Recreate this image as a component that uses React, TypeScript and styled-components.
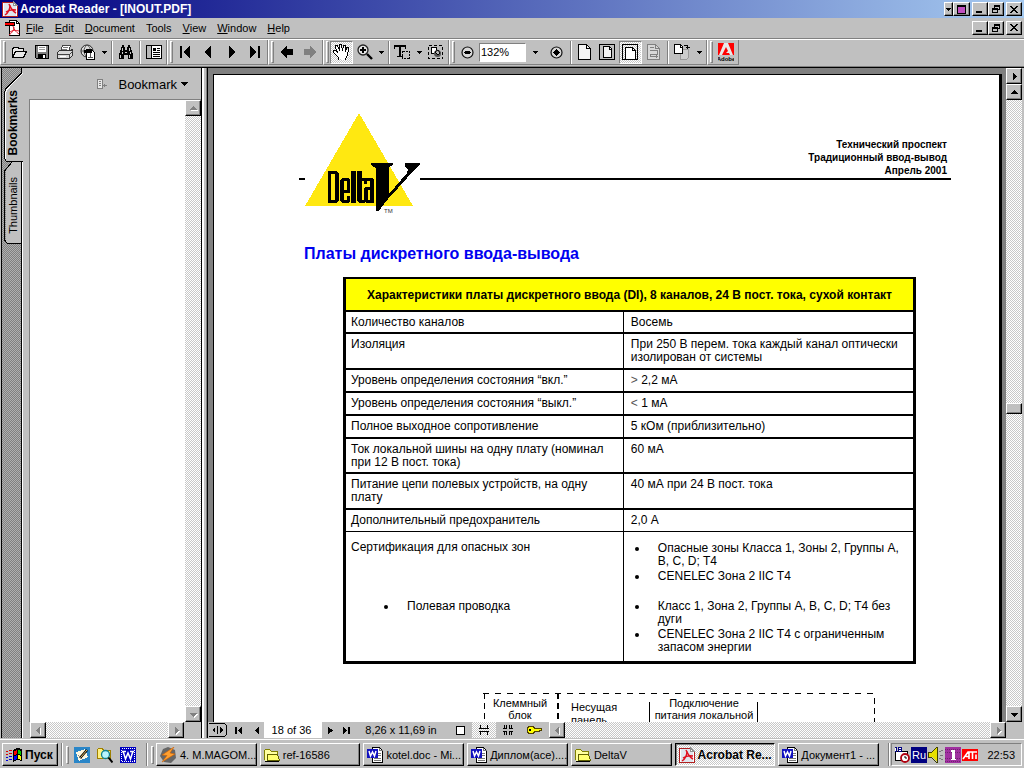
import React from 'react';
import styled, { createGlobalStyle, css } from 'styled-components';

const FACE = '#c0c0c0';
const SHADE = '#808080';
const HATCH = 'repeating-conic-gradient(#ffffff 0 25%, #c8c8c8 0 50%) 0 0 / 2px 2px';
const DARK_HATCH = 'repeating-conic-gradient(#808080 0 25%, #b0b0b0 0 50%) 0 0 / 2px 2px';

const Global = createGlobalStyle`
  * { box-sizing: border-box; }
  body { margin: 0; background: ${FACE}; overflow: hidden; }
  body, button, input { font-family: "Liberation Sans", Arial, sans-serif; font-size: 11px; color: #000; }
  button { margin: 0; padding: 0; border: 0; background: none; cursor: default; }
  svg { display: block; flex: none; }
`;

const raised = css`
  background: ${FACE};
  border: 1px solid;
  border-color: #fff #000 #000 #fff;
  box-shadow: inset -1px -1px 0 ${SHADE};
`;

const sunken = css`
  border: 1px solid;
  border-color: ${SHADE} #fff #fff ${SHADE};
`;

const Window = styled.div`
  height: 100vh;
  display: flex;
  flex-direction: column;
  background: ${FACE};
`;

/* ---------- title and menu ---------- */

const TitleBar = styled.header`
  flex: none;
  height: 18px;
  display: flex;
  align-items: center;
  gap: 2px;
  padding: 0 2px;
  background: linear-gradient(90deg, #000080, #a6caf0);
`;

const Title = styled.h1`
  flex: 1;
  margin: 0;
  font-size: 12px;
  line-height: 18px;
  font-weight: bold;
  color: #fff;
  white-space: nowrap;
`;

const MenuBar = styled.nav`
  flex: none;
  height: 22px;
  display: flex;
  align-items: center;
  padding: 0 2px 2px 5px;
  border-bottom: 1px solid #fff;
  box-shadow: inset 0 -1px 0 ${SHADE};
`;

const MenuItem = styled.button`
  padding: 0 6px 0 5px;
  line-height: 18px;
`;

const Spacer = styled.div`
  flex: 1;
`;

const WindowButtons = styled.div`
  display: flex;
  gap: 2px;
`;

const Joined = styled.div`
  display: flex;
`;

const CaptionButton = styled.button<{ $w?: number }>`
  ${raised}
  width: ${p => p.$w ?? 16}px;
  height: 14px;
  display: flex;
  align-items: center;
  justify-content: center;
`;

/* ---------- toolbar ---------- */

const Toolbar = styled.div`
  flex: none;
  height: 28px;
  display: flex;
  align-items: flex-start;
  border-bottom: 1px solid #000;
  box-shadow: inset 0 -1px 0 ${SHADE};
`;

const ToolGroup = styled.div`
  flex: none;
  height: 25px;
  display: flex;
  align-items: center;
  padding-right: 1px;
  border-left: 1px solid #fff;
  border-right: 1px solid ${SHADE};
  border-bottom: 1px solid ${SHADE};
`;

const Grip = styled.div<{ $tall?: boolean }>`
  flex: none;
  width: 3px;
  height: ${p => (p.$tall ? 18 : 22)}px;
  margin: 0 1px 0 2px;
  border: 1px solid;
  border-color: #fff ${SHADE} ${SHADE} #fff;
`;

const Tool = styled.button<{ $w?: number; $pressed?: boolean }>`
  flex: none;
  width: ${p => p.$w ?? 23}px;
  height: 23px;
  display: flex;
  align-items: center;
  justify-content: center;
  ${p => p.$pressed && css`background: ${HATCH}; ${sunken}`}
`;

const Divider = styled.div`
  flex: none;
  width: 2px;
  height: 23px;
  margin: 0 1px 0 2px;
  border-left: 1px solid ${SHADE};
  border-right: 1px solid #fff;
`;

const ZoomInput = styled.input`
  flex: none;
  width: 47px;
  height: 19px;
  padding: 0 1px;
  border-radius: 0;
  background: #fff;
  ${sunken}
`;

/* ---------- workspace ---------- */

const Workspace = styled.main`
  flex: 1;
  min-height: 0;
  display: flex;
  padding: 0 2px 0 1px;
`;

const TabStrip = styled.div`
  flex: none;
  width: 22px;
  display: flex;
  flex-direction: column;
  border-left: 1px solid #000;
  background: ${DARK_HATCH};
`;

const SideTab = styled.button<{ $bold?: boolean }>`
  flex: none;
  display: grid;
  justify-items: center;
  align-items: center;
  font-size: ${p => (p.$bold ? 12 : 11)}px;
  font-weight: ${p => (p.$bold ? 'bold' : 'normal')};
  > * { grid-area: 1 / 1; }
`;

const SideTabLabel = styled.span<{ $drop: number }>`
  writing-mode: vertical-rl;
  transform: rotate(180deg);
  line-height: 14px;
  padding-bottom: ${p => p.$drop}px;
  align-self: start;
`;

const StripRest = styled.div`
  flex: 1;
  border-right: 1px solid #fff;
  box-shadow: inset -1px 0 0 #000;
`;

const SidePanel = styled.aside`
  flex: none;
  width: 178px;
  display: flex;
  flex-direction: column;
  padding-left: 6px;
`;

const PanelHeader = styled.div`
  flex: none;
  height: 31px;
  display: flex;
  align-items: center;
  justify-content: flex-end;
  gap: 11px;
  padding: 1px 13px 0 0;
`;

const PanelMenu = styled.button`
  display: flex;
  align-items: center;
  gap: 4px;
  font-size: 13px;
`;

const PanelBody = styled.div`
  flex: 1;
  min-height: 0;
  display: flex;
  border-left: 1px solid ${SHADE};
  border-top: 1px solid ${SHADE};
`;

const BlankList = styled.div`
  flex: 1;
  background: #fff;
`;

const PanelFoot = styled.div`
  flex: none;
  display: flex;
  padding: 0 17px 0 1px;
`;

const VTrack = styled.div`
  flex: none;
  width: 16px;
  display: flex;
  flex-direction: column;
  background: ${HATCH};
`;

const HTrack = styled.div`
  flex: 1;
  height: 16px;
  display: flex;
  justify-content: space-between;
  background: ${HATCH};
`;

const ScrollCorner = styled.div`
  flex: none;
  width: 16px;
  background: ${FACE};
`;

const ScrollButton = styled.button`
  ${raised}
  flex: none;
  width: 16px;
  height: 16px;
  display: flex;
  align-items: center;
  justify-content: center;
`;

const TrackPart = styled.div<{ $share: number }>`
  flex: ${p => p.$share} 1 0;
`;

const Thumb = styled.div`
  ${raised}
  flex: none;
  height: 11px;
`;

const Splitter = styled.div`
  flex: none;
  width: 7px;
  background: ${FACE};
  border: solid #000;
  border-width: 0 1px;
  box-shadow: inset 2px 0 0 #fff, inset -1px 0 0 ${SHADE};
`;

const DocArea = styled.section`
  flex: 1;
  min-width: 0;
  display: flex;
  flex-direction: column;
`;

const DocRow = styled.div`
  flex: 1;
  min-height: 0;
  display: flex;
`;

const Viewport = styled.div`
  flex: 1;
  min-width: 0;
  display: flex;
  padding: 6px 4px 0 5px;
  background: ${SHADE};
  overflow: hidden;
`;

const Page = styled.article`
  flex: 1;
  min-width: 0;
  padding: 38px 48px 0 85px;
  background: #fff;
  border: solid #000;
  border-width: 1px 3px 0 1px;
  overflow: hidden;
`;

const PageHead = styled.div`
  display: flex;
  height: 101px;
`;

const Rule = styled.div<{ $w?: number }>`
  ${p => (p.$w ? `flex: none; width: ${p.$w}px;` : 'flex: 1;')}
  height: 67px;
  display: flex;
  flex-direction: column;
  justify-content: flex-end;
  align-items: flex-end;
  padding: 0 4px 1px 0;
  border-bottom: 2px solid #000;
  font-size: 10px;
  line-height: 13px;
  font-weight: bold;
`;

const Heading = styled.h2`
  margin: 30px 0 0 5px;
  font-size: 16px;
  line-height: 20px;
  color: #0000f0;
`;

const TableWrap = styled.div`
  margin: 13px 35px 0 44px;
`;

const SpecTable = styled.table`
  width: 100%;
  table-layout: fixed;
  border-collapse: separate;
  border-spacing: 0;
  border: solid #000;
  border-width: 2px 3px 3px;
  font-size: 12px;
  line-height: 13px;
`;

const TableTitle = styled.th`
  height: 33px;
  padding: 2px 0 0;
  background: #ff0;
  border-bottom: 2px solid #000;
`;

const Row = styled.tr<{ $h: number; $line: number; $top: number }>`
  height: ${p => p.$h}px;
  > * {
    padding: ${p => p.$top}px 8px 0 7px;
    border-bottom: ${p => p.$line}px solid #000;
    vertical-align: top;
    text-align: left;
    font-weight: normal;
  }
  > th { border-right: 1px solid #000; padding-left: 5px; }
`;

const Pale = styled.span`
  color: #555;
`;

const Bullets = styled.ul<{ $top: number; $indent: number }>`
  margin: ${p => p.$top}px 0 0 ${p => p.$indent}px;
  padding: 0;
  list-style: none;
  display: flex;
  flex-direction: column;
  gap: 2px;
`;

const Bullet = styled.li<{ $above?: number }>`
  display: flex;
  margin-top: ${p => p.$above ?? 0}px;
  &::before {
    content: "";
    flex: none;
    width: 4px;
    height: 4px;
    margin: 5px 19px 0 0;
    border-radius: 2px;
    background: #000;
  }
`;

const Diagram = styled.svg`
  margin: 28px 0 0 184px;
  font-size: 11px;
`;

/* ---------- page navigation ---------- */

const StatusBar = styled.div`
  flex: none;
  height: 16px;
  display: flex;
`;

const StatusControls = styled.div`
  flex: none;
  width: 341px;
  display: flex;
  align-items: center;
`;

const StatusButton = styled.button<{ $w: number; $pressed?: boolean }>`
  flex: none;
  width: ${p => p.$w}px;
  height: 16px;
  display: flex;
  align-items: center;
  justify-content: center;
  ${p => p.$pressed && css`background: ${HATCH};`}
`;

const PageInput = styled.input`
  flex: none;
  width: 58px;
  height: 16px;
  padding: 0 3px 0 0;
  border: 0;
  text-align: center;
  background: #fff;
`;

const PageSize = styled.span`
  flex: none;
  width: 94px;
  text-align: center;
  white-space: nowrap;
`;

/* ---------- taskbar ---------- */

const Taskbar = styled.footer`
  flex: none;
  height: 30px;
  display: flex;
  align-items: flex-start;
  padding: 4px 2px 0;
  border-top: 1px solid ${FACE};
  box-shadow: inset 0 1px 0 #fff;
`;

const StartButton = styled.button`
  ${raised}
  flex: none;
  width: 56px;
  height: 23px;
  display: flex;
  align-items: center;
  gap: 2px;
  padding-left: 3px;
  font-size: 12px;
  font-weight: bold;
`;

const BarGap = styled.div`
  flex: none;
  width: 2px;
  height: 23px;
  margin: 0 1px 0 3px;
  border-left: 1px solid ${SHADE};
  border-right: 1px solid #fff;
`;

const BarGrip = styled(Grip)`
  margin-top: 3px;
`;

const QuickLaunch = styled.div`
  flex: none;
  width: 73px;
  height: 23px;
  display: flex;
  align-items: center;
  gap: 7px;
  padding-left: 4px;
`;

const Tasks = styled.div`
  flex: 1;
  min-width: 0;
  display: flex;
  gap: 3px;
  padding: 0 6px 0 1px;
`;

const Task = styled.button<{ $active?: boolean }>`
  ${raised}
  flex: 1;
  min-width: 0;
  height: 23px;
  display: flex;
  align-items: center;
  gap: 3px;
  padding-left: 3px;
  white-space: nowrap;
  overflow: hidden;
  ${p => p.$active && css`
    background: ${HATCH};
    border-color: #000 #fff #fff #000;
    box-shadow: inset 1px 1px 0 ${SHADE};
    font-size: 12px;
    font-weight: bold;
  `}
`;

const Tray = styled.div`
  ${sunken}
  flex: none;
  width: 131px;
  height: 23px;
  display: flex;
  align-items: center;
  gap: 1px;
  padding: 0 6px 0 2px;
`;

const Lang = styled.span`
  width: 16px;
  height: 16px;
  line-height: 16px;
  text-align: center;
  background: #000080;
  color: #fff;
`;

const Clock = styled.time`
  flex: 1;
  text-align: right;
`;

/* ---------- drawings ---------- */

const Ico = ({ w = 16, h = 16, children }: { w?: number; h?: number; children: React.ReactNode }) => (
  <svg width={w} height={h} viewBox={`0 0 ${w} ${h}`} shapeRendering="crispEdges" fill="none" stroke="none" aria-hidden="true">
    {children}
  </svg>
);

const Down = ({ w = 5 }: { w?: number }) => {
  const h = (w + 1) / 2;
  return <Ico w={w} h={h}><path d={`M0 0h${w}v1h-1v1h-1${w > 5 ? 'v1h-1v1h-1v-1h-1v-1h-1v-1h-1' : 'v1h-1v-1h-1v-1h-1'}z`} fill="#000" /></Ico>;
};

const Arrow = ({ dir, color = '#000', light }: { dir: 'up' | 'down' | 'left' | 'right'; color?: string; light?: boolean }) => {
  const shapes = {
    up: 'M4 2h1v1h1v1h1v1h1v1H1V5h1V4h1V3h1z',
    down: 'M1 3h7v1H7v1H6v1H5v1H4V6H3V5H2V4H1z',
    left: 'M6 1v7H5V7H4V6H3V5H2V4h1V3h1V2h1V1z',
    right: 'M3 1h1v1h1v1h1v1h1v1H6v1H5v1H4v1H3z',
  };
  return (
    <Ico w={9} h={9}>
      {light && <path d={shapes[dir]} fill="#fff" transform="translate(1 1)" />}
      <path d={shapes[dir]} fill={color} />
    </Ico>
  );
};

const PdfIcon = () => (
  <Ico>
    <path d="M1 1h11l3 3v12H1z" fill="#fff" />
    <path d="M2 2h9v3h3v10H2z" fill="#dfe6ee" />
    <path d="M.5 1v14.500h14.500V4M1 1h11" stroke="#b02020" />
    <path d="M11.500 1v3.500H15z" fill="#fff" stroke="#909090" />
    <g shapeRendering="auto"><path d="M7 3c2 4 3 7 7 9M8 4c0 4-2 8-5 10M4 11c3-2 6-3 10-2" stroke="#e01020" strokeWidth="1.500" /></g>
  </Ico>
);

const PdfDoc = () => (
  <Ico>
    <path d="M4.500 .5h7l3 3v12h-10z" fill="#fff" stroke="#000" />
    <path d="M11.500 .5v3h3" stroke="#000" />
    <path d="M0 2h10v4H0z" fill="#000" />
    <path d="M0 3h9v2H0z" fill="#f00" />
    <g shapeRendering="auto"><path d="M8 6c1 4 3 6 6 8M9 7c0 3-2 6-5 8M5 12c3-2 5-2 9-1" stroke="#e02030" /></g>
  </Ico>
);

const OpenIcon = () => (
  <Ico><path d="M1.500 13V4.500l2-1h3l2 1h4v3" stroke="#000" fill="#e8e8e8" /><path d="M1.500 13.500l3-6h11l-3 6z" fill="#e8e8e8" stroke="#000" /></Ico>
);
const SaveIcon = () => (
  <Ico><path d="M1.500 1.500h13v13h-12l-1-1z" fill="#808080" stroke="#000" /><path d="M4 2h8v6H4z" fill="#fff" /><path d="M5 3.500h6M5 5.500h6" stroke="#999" /><path d="M4 10h8v5H4z" fill="#000" /><path d="M9 11h2v3H9z" fill="#fff" /></Ico>
);
const PrintIcon = () => (
  <Ico><path d="M5.500 1.500h8l-2 6h-8z" fill="#fff" stroke="#444" /><path d="M6 3.500h5M5 5.500h5" stroke="#777" /><path d="M.5 8.500l2-2h11l2-1v6l-3 3H.5z" fill="#d8d8d8" stroke="#333" /><path d="M1 10.500h11.500V14M12.500 10.500l3-3" stroke="#444" /><path d="M3 12h6v1H3z" fill="#fff" /></Ico>
);
const GlobeIcon = () => (
  <Ico><g shapeRendering="auto"><circle cx="7" cy="7" r="6" stroke="#222" fill="#ddd" /><path d="M1 7h12M7 1c-4 3-4 9 0 12M7 1c3 2 4 5 3 7" stroke="#555" /></g><path d="M6.500 5.500h5l3 3v7h-8z" fill="#fff" stroke="#000" /><path d="M4 6h8v3H4z" fill="#000" /><path d="M10.500 9v4M8 13.500h5" stroke="#555" /></Ico>
);
const FindIcon = () => (
  <Ico><path d="M4 1h2v2h1v3h2V3h1V1h2v2h1v3h1v3h1v6h-5v-4H6v4H1V9h1V6h1V3h1z" fill="#000" /><path d="M4.500 4v3M4.500 8v2M2.500 11v3M11.500 4v3M12.500 8v2M11.500 11v3M7 8.500h2" stroke="#ccc" /></Ico>
);
const PaneIcon = () => (
  <Ico><path d="M.5 1.500h15v13H.5z" fill="#fff" stroke="#000" /><path d="M1 2h4v12H1z" fill="#b8b8b8" /><path d="M5.500 2v12" stroke="#000" /><path d="M7 4h3v3H7z" fill="#000" /><path d="M11 4.500h3M11 6.500h3M7 8.500h7M7 10.500h7M7 12.500h7" stroke="#000" /></Ico>
);
const NavIcon = ({ kind }: { kind: 'first' | 'prev' | 'next' | 'last' }) => (
  <Ico w={11} h={12}>
    {kind === 'first' && <path d="M0 0h2v12H0zM10 0v12H9v-1H8v-1H7V9H6V8H5V7H4V5h1V4h1V3h1V2h1V1h1V0z" fill="#000" />}
    {kind === 'prev' && <path d="M8 0v12H7v-1H6v-1H5V9H4V8H3V7H2V5h1V4h1V3h1V2h1V1h1V0z" fill="#000" />}
    {kind === 'next' && <path d="M3 0v12h1v-1h1v-1h1V9h1V8h1V7h1V5H8V4H7V3H6V2H5V1H4V0z" fill="#000" />}
    {kind === 'last' && <path d="M9 0h2v12H9zM1 0v12h1v-1h1v-1h1V9h1V8h1V7h1V5H6V4H5V3H4V2H3V1H2V0z" fill="#000" />}
  </Ico>
);
const GoIcon = ({ forward }: { forward?: boolean }) => (
  <Ico w={12} h={12}>
    {forward
      ? <path d="M6 0h1v1h1v1h1v1h1v1h1v1h1v2h-1v1h-1v1H9v1H8v1H7v1H6V9H0V3h6z" fill={SHADE} />
      : <path d="M6 0H5v1H4v1H3v1H2v1H1v1H0v2h1v1h1v1h1v1h1v1h1v1h1V9h6V3H6z" fill="#000" />}
  </Ico>
);
const HandIcon = () => (
  <Ico w={17}><path d="M5 15L1 9V7h2l2 3L3 4V2h2l2 5V1h2l1 6 1-5h2v6l2-4h2v2l-2 6-2 4z" fill="#fff" /><path d="M5.500 15.500v-2L.5 8.500v-2h2l2 2-2-5v-2h2l2 5v-6h2l1 6 1-5h2v6l1-4h2v2l-1 6-2 3v2" stroke="#000" /></Ico>
);
const MagnifyIcon = () => (
  <Ico><g shapeRendering="auto"><circle cx="6" cy="6" r="5" fill="#e4e4e4" stroke="#222" strokeWidth="1.300" /><path d="M10 10l5 5" stroke="#000" strokeWidth="2.400" /></g><path d="M3 5h6v2H3zM5 3h2v6H5z" fill="#000" /></Ico>
);
const TextIcon = () => (
  <Ico w={17}><path d="M0 1h12v4h-1V3H7v9h2v1H3v-1h2V3H1v2H0z" fill="#000" /><path d="M8.500 7.500h7v7h-7z" fill={FACE} stroke="#000" strokeDasharray="2 1" /></Ico>
);
const GraphicIcon = () => (
  <Ico w={15}><path d="M.5 1.500h14v13H.5z" stroke="#000" strokeDasharray="3 2" /><path d="M3.500 3.500h5v6h-5z" fill="#fff" stroke="#000" /><g shapeRendering="auto"><circle cx="9.500" cy="9.500" r="3.500" fill="#555" /><path d="M7 8l3-2 2 3-2 2z" fill="#bbb" stroke="#000" /></g></Ico>
);
const RoundIcon = ({ plus }: { plus?: boolean }) => (
  <Ico w={13} h={13}><g shapeRendering="auto"><circle cx="6.500" cy="6.500" r="5.500" fill="#d8d8d8" stroke="#111" strokeWidth="1.200" /></g><path d="M3 6h7v1H3z" fill="#000" /><path d="M4 5h5v3H4z" fill="#000" />{plus && <path d="M5 4h3v5H5zM6 3h1v7H6z" fill="#000" />}</Ico>
);
const PageIcon = ({ frame, dim }: { frame?: 'full' | 'wide'; dim?: boolean }) => {
  const c = dim ? SHADE : '#000';
  return (
    <Ico w={17} h={17}>
      {frame === 'full' && <><path d="M.5 .5h15v15H.5z" stroke="#000" /><path d="M4.500 2.500h6l2 2v9h-8z" fill="#f4f4f4" stroke="#000" /><path d="M10.500 2.500v3h2" stroke="#000" /></>}
      {frame === 'wide' && <><path d="M.5 .5h15v15H.5z" stroke="#000" /><path d="M3.500 3.500h7l3 3v9h-10z" fill="#fff" stroke="#000" /><path d="M10.500 3.500v3h3" stroke="#000" /></>}
      {!frame && <><path d="M2.500 .5h8l4 4v11h-12z" fill={dim ? '#d8d8d8' : '#f4f4f4'} stroke={c} /><path d="M10.500 .5v4h4" stroke={c} /></>}
      {dim && <path d="M5 3.500h4M5 6.500h7v4H5.500v2h7M10.500 10.500l2 2-2 2" stroke={c} />}
    </Ico>
  );
};
const RotateIcon = () => (
  <Ico><path d="M6.500 5.500h8v8l-2 2h-6z" fill="#ccc" stroke="#999" /><path d="M.5 .5h6l2 2v7h-8z" fill="#fff" stroke="#000" /><path d="M6.500 1v2h2" stroke="#000" /><path d="M10 1.500h3.500V5M11.500 3.500h4" stroke="#000" /></Ico>
);
const AdobeIcon = () => (
  <Ico w={16} h={20}>
    <path d="M0 1h16v12H0z" fill="#f00" />
    <g shapeRendering="auto"><path d="M6 1h4l5 12h-3l-1-2H8l2-2-2-4-4 8H1z" fill="#e8e8e8" /></g>
    <text x="8" y="19" textAnchor="middle" fontSize="6" fontWeight="bold" fill="#000">Adobe</text>
  </Ico>
);

const MinGlyph = () => <Ico w={8} h={8}><path d="M0 6h6v2H0z" fill="#000" /></Ico>;
const RestoreGlyph = () => <Ico w={8} h={8}><path d="M2 0h6v5H6V4h1V2H3v1H2zM0 3h6v5H0zM1 5v2h4V5z" fill="#000" fillRule="evenodd" /></Ico>;
const CloseGlyph = () => <Ico w={8} h={7}><path d="M0 0h2v1h1v1h2V1h1V0h2v1H7v1H6v1H5v1h1v1h1v1h1v1H6V6H5V5H3v1H2v1H0V6h1V5h1V4h1V3H2V2H1V1H0z" fill="#000" /></Ico>;

const DocButtons = () => (
  <WindowButtons>
    <Joined>
      <CaptionButton aria-label="Minimize"><MinGlyph /></CaptionButton>
      <CaptionButton aria-label="Restore"><RestoreGlyph /></CaptionButton>
    </Joined>
    <CaptionButton aria-label="Close"><CloseGlyph /></CaptionButton>
  </WindowButtons>
);

const Logo = () => (
  <svg width="115" height="101" viewBox="0 0 115 101" role="img" aria-label="DeltaV">
    <g shapeRendering="crispEdges">
      <path d="M54 0L108 93H0z" fill="#ffe811" />
      <path d="M23 58h8l3 3v26l-3 3h-8zM26 61v26h4V61z" fill="#000" fillRule="evenodd" />
      <path d="M37 65h6l2 2v13h-6v7h3v-4h3v5l-2 2h-6l-2-2V67zM39 68v9h3v-9z" fill="#000" fillRule="evenodd" />
      <path d="M46 58h5v32h-5zM52 58h5v7h4v3h-4v19h3v3h-5l-3-2z" fill="#000" />
      <path d="M60 65h7l2 2v23h-8l-2-2V75l2-1h4v-6h-3v3h-3v-4zM63 77v10h2V77z" fill="#000" fillRule="evenodd" />
      <path d="M66 50h22v2l-4 2v27l18-21 1-4-2-1-1-1v-4h15v2l-3 2L83 86l-7 9-2 3h-3V56l-2-2-3-2z" fill="#000" />
    </g>
    <text x="79" y="100" fontSize="6" fill="#333">TM</text>
  </svg>
);

const FolderIcon = () => (
  <Ico><path d="M.5 13V3.500l1-1h4l2 2h6v3" fill="#ffffa0" stroke="#808000" /><path d="M1 5h12v9H1z" fill="#ffffa0" /><path d="M3.500 7.500h10l2 6h-12z" fill="#ffff70" stroke="#606000" /><path d="M1 14.500h14" stroke="#000" /></Ico>
);
const WordDocIcon = () => (
  <Ico><path d="M5.500 .5h7l3 3v12h-10z" fill="#fff" stroke="#000" /><path d="M12.500 .5v3h3M11 6.500h3M11 8.500h3M7 11.500h7M7 13.500h7" stroke="#777" /><path d="M0 2h11v9H0z" fill="#1010c0" /><g shapeRendering="auto"><path d="M2 4l1.500 5 2-4 2 4L9 4" stroke="#fff" strokeWidth="1.500" /></g></Ico>
);
const WordIcon = () => (
  <Ico><path d="M0 0h16v16H0z" fill="#0000c0" /><path d="M1.500 1.500h13v13h-13z" stroke="#fff" strokeDasharray="1 1" /><g shapeRendering="auto"><path d="M3 4l2.500 8L8 6l2.500 6L13 4M2 4.500h4M10 4.500h4" stroke="#fff" strokeWidth="1.500" /></g></Ico>
);
const StartLogo = () => (
  <Ico w={17}><path d="M7 3l4-2 5 1v12l-5-1-4 2z" fill="#000" /><path d="M8 4l3-1v4L8 8z" fill="#f00" /><path d="M12 3l3 1v4l-3-1z" fill="#0c0" /><path d="M8 9l3-1v4l-3 1z" fill="#00f" /><path d="M12 8l3 1v4l-3-1z" fill="#ff0" /><path d="M0 4.500h2M3 3.500h3M0 7.500h2M3 6.500h3" stroke="#d00" /><path d="M0 10.500h2M3 9.500h3M0 13.500h2M3 12.500h3" stroke="#00d" /></Ico>
);
const DesktopIcon = () => (
  <Ico><path d="M0 0h16v16H0z" fill="#2a86c8" /><path d="M2 5l9-3 3 8-9 4z" fill="#fff8e0" /><g shapeRendering="auto"><path d="M6 11L13 3" stroke="#000" strokeWidth="2.500" /><path d="M7 10L13 3" stroke="#e8c060" /><path d="M4 8l4 4" stroke="#888" /></g></Ico>
);
const SearchFolderIcon = () => (
  <Ico><path d="M.5 12V2.500l1-1h4l1 2h7v8z" fill="#fff080" stroke="#a08000" /><g shapeRendering="auto"><circle cx="8.500" cy="7.500" r="4" fill="#b8f4ff" stroke="#108090" strokeWidth="1.300" /><path d="M11.500 10.500l4 5" stroke="#000" strokeWidth="2" /></g></Ico>
);
const WinampIcon = () => (
  <Ico w={17}><g shapeRendering="auto"><path d="M3 2l5-2 7 3 1 8-5 5-7-1-4-6z" fill="#666" /><path d="M14 0L2 8l5 .5L2 15 15 7l-5-1z" fill="#ffa030" stroke="#d06000" strokeWidth="0.600" /></g></Ico>
);
const SchedulerIcon = () => (
  <Ico><path d="M1.500 4.500h12v9h-12z" fill="#fff" stroke="#000" /><path d="M.5 .5h2v4h-2M4.500 .5h3v4h-3zM4.500 2.500h3" fill="#fff" stroke="#000080" /><g shapeRendering="auto"><circle cx="11" cy="11" r="4" fill="#fff" stroke="#b00010" strokeWidth="1.800" /><path d="M11 9v2h2" stroke="#000" /></g></Ico>
);
const SpeakerIcon = () => (
  <Ico><path d="M1 5h3l5-5h1v15H9l-5-5H1z" fill="#e8e000" /><path d="M.5 5.500h3l5-5h1v15h-1l-5-5h-3z" stroke="#404000" /><path d="M11.500 5l3-2M12 8.500h3M11.500 11l3 2" stroke="#777" /></Ico>
);
const PurpleIcon = () => (
  <Ico><path d="M0 0h16v16H0z" fill="#a030a0" /><path d="M0 2.500h16M0 5.500h16M0 11.500h16M0 14.500h16" stroke="#702070" strokeDasharray="1 1" /><path d="M6 3h4v9h1v1H6v-1h1V5H6z" fill="#fff" /></Ico>
);
const AtiIcon = () => (
  <Ico><path d="M0 2h16v12H0z" fill="#f00" /><g shapeRendering="auto"><path d="M1 12l5-7h9M7 5v7M4 9.500h3M10.500 5v7M14 7.500v4.500" stroke="#fff" strokeWidth="1.600" /></g></Ico>
);

/* ---------- content ---------- */

type Spec = { name: string; value: React.ReactNode; h: number; line?: number };

const specs: Spec[] = [
  { name: 'Количество каналов', value: 'Восемь', h: 22 },
  { name: 'Изоляция', value: 'При 250 В перем. тока каждый канал оптически изолирован от системы', h: 36 },
  { name: 'Уровень определения состояния “вкл.”', value: <><Pale>&gt;</Pale> 2,2 мА</>, h: 23 },
  { name: 'Уровень определения состояния “выкл.”', value: <><Pale>&lt;</Pale> 1 мА</>, h: 23 },
  { name: 'Полное выходное сопротивление', value: '5 кОм (приблизительно)', h: 23 },
  { name: 'Ток локальной шины на одну плату (номинал при 12 В пост. тока)', value: '60 мА', h: 35 },
  { name: 'Питание цепи полевых устройств, на одну плату', value: '40 мА при 24 В пост. тока', h: 36 },
  { name: 'Дополнительный предохранитель', value: '2,0 А', h: 22, line: 1 },
];

const tasks = [
  { icon: <WinampIcon />, label: '4. M.MAGOM...' },
  { icon: <FolderIcon />, label: 'ref-16586' },
  { icon: <WordDocIcon />, label: 'kotel.doc - Mi...' },
  { icon: <WordDocIcon />, label: 'Диплом(ace)....' },
  { icon: <FolderIcon />, label: 'DeltaV' },
  { icon: <PdfIcon />, label: 'Acrobat Re...', active: true },
  { icon: <WordDocIcon />, label: 'Документ1 - ...' },
];

const MainToolbar = () => (
  <Toolbar role="toolbar">
    <ToolGroup>
      <Grip />
      <Tool aria-label="Open"><OpenIcon /></Tool>
      <Tool aria-label="Save"><SaveIcon /></Tool>
      <Tool aria-label="Print"><PrintIcon /></Tool>
      <Tool aria-label="Web"><GlobeIcon /></Tool>
      <Tool $w={10} aria-label="Web options"><Down /></Tool>
      <Divider />
      <Tool aria-label="Find"><FindIcon /></Tool>
      <Divider />
      <Tool aria-label="Navigation pane"><PaneIcon /></Tool>
    </ToolGroup>
    <ToolGroup>
      <Grip />
      <Tool aria-label="First page"><NavIcon kind="first" /></Tool>
      <Tool aria-label="Previous page"><NavIcon kind="prev" /></Tool>
      <Tool aria-label="Next page"><NavIcon kind="next" /></Tool>
      <Tool aria-label="Last page"><NavIcon kind="last" /></Tool>
    </ToolGroup>
    <ToolGroup>
      <Grip />
      <Tool aria-label="Go back"><GoIcon /></Tool>
      <Tool aria-label="Go forward"><GoIcon forward /></Tool>
    </ToolGroup>
    <ToolGroup>
      <Grip />
      <Tool $pressed aria-label="Hand"><HandIcon /></Tool>
      <Tool aria-label="Zoom tool"><MagnifyIcon /></Tool>
      <Tool $w={10} aria-label="Zoom options"><Down /></Tool>
      <Divider />
      <Tool aria-label="Select text"><TextIcon /></Tool>
      <Tool $w={10} aria-label="Select options"><Down /></Tool>
      <Tool aria-label="Select graphics"><GraphicIcon /></Tool>
    </ToolGroup>
    <ToolGroup>
      <Grip />
      <Tool aria-label="Zoom out"><RoundIcon /></Tool>
      <ZoomInput aria-label="Zoom level" defaultValue="132%" />
      <Tool $w={19} aria-label="Zoom levels"><Down /></Tool>
      <Tool aria-label="Zoom in"><RoundIcon plus /></Tool>
      <Divider />
      <Tool aria-label="Actual size"><PageIcon /></Tool>
      <Tool aria-label="Fit in window"><PageIcon frame="full" /></Tool>
      <Tool $pressed aria-label="Fit width"><PageIcon frame="wide" /></Tool>
      <Tool aria-label="Reflow"><PageIcon dim /></Tool>
      <Divider />
      <Tool aria-label="Rotate"><RotateIcon /></Tool>
      <Tool $w={12} aria-label="Rotate options"><Down /></Tool>
    </ToolGroup>
    <ToolGroup>
      <Grip />
      <Tool aria-label="Adobe website"><AdobeIcon /></Tool>
    </ToolGroup>
  </Toolbar>
);

const DocumentPage = () => (
  <Page>
    <PageHead>
      <Rule $w={6} />
      <Logo />
      <Rule>
        <span>Технический проспект</span>
        <span>Традиционный ввод-вывод</span>
        <span>Апрель 2001</span>
      </Rule>
    </PageHead>
    <Heading>Платы дискретного ввода-вывода</Heading>
    <TableWrap>
      <SpecTable>
        <colgroup><col width="49%" /><col /></colgroup>
        <thead>
          <tr><TableTitle colSpan={2}>Характеристики платы дискретного ввода (DI), 8 каналов, 24 В пост. тока, сухой контакт</TableTitle></tr>
        </thead>
        <tbody>
          {specs.map(s => (
            <Row key={s.name} $h={s.h} $line={s.line ?? 2} $top={4}>
              <th scope="row">{s.name}</th>
              <td>{s.value}</td>
            </Row>
          ))}
          <Row $h={129} $line={0} $top={9}>
            <th scope="row">
              Сертификация для опасных зон
              <Bullets $top={46} $indent={33}><Bullet>Полевая проводка</Bullet></Bullets>
            </th>
            <td>
              <Bullets $top={1} $indent={4}>
                <Bullet>Опасные зоны Класса 1, Зоны 2, Группы A, B, C, D; T4</Bullet>
                <Bullet>CENELEC Зона 2 IIC T4</Bullet>
                <Bullet $above={15}>Класс 1, Зона 2, Группы A, B, C, D; T4 без дуги</Bullet>
                <Bullet>CENELEC Зона 2 IIC T4 с ограниченным запасом энергии</Bullet>
              </Bullets>
            </td>
          </Row>
        </tbody>
      </SpecTable>
    </TableWrap>
    <Diagram width="392" height="60" viewBox="0 0 392 60">
      <g stroke="#000" shapeRendering="crispEdges">
        <path d="M0 1.500h391" strokeDasharray="6 6" />
        <path d="M1.500 1v58M391.500 6v53" strokeDasharray="6 4" />
        <path d="M75 1v58" strokeWidth="2" strokeDasharray="6 4" />
        <path d="M166.500 10v50M274.500 10v50" />
      </g>
      <text x="37" y="15" textAnchor="middle">Клеммный</text>
      <text x="37" y="27" textAnchor="middle">блок</text>
      <text x="88" y="19">Несущая</text>
      <text x="88" y="32">панель</text>
      <text x="221" y="15" textAnchor="middle">Подключение</text>
      <text x="221" y="27" textAnchor="middle">питания локальной</text>
    </Diagram>
  </Page>
);

export default function App() {
  return (
    <Window>
      <Global />
      <TitleBar>
        <PdfIcon />
        <Title>Acrobat Reader - [INOUT.PDF]</Title>
        <Joined>
          <CaptionButton $w={9} aria-label="Display menu"><Down /></CaptionButton>
          <CaptionButton $w={17} aria-label="Display">
            <Ico w={9} h={9}><path d="M0 0h9v9H0z" fill="#000" /><path d="M1 2h7v6H1z" fill="#c050c0" /></Ico>
          </CaptionButton>
        </Joined>
        <DocButtons />
      </TitleBar>
      <MenuBar>
        <PdfDoc />
        <MenuItem><u>F</u>ile</MenuItem>
        <MenuItem><u>E</u>dit</MenuItem>
        <MenuItem><u>D</u>ocument</MenuItem>
        <MenuItem>Tools</MenuItem>
        <MenuItem><u>V</u>iew</MenuItem>
        <MenuItem><u>W</u>indow</MenuItem>
        <MenuItem><u>H</u>elp</MenuItem>
        <Spacer />
        <DocButtons />
      </MenuBar>
      <MainToolbar />
      <Workspace>
        <TabStrip>
          <SideTab $bold>
            <svg width="21" height="94" viewBox="0 0 21 94" shapeRendering="crispEdges">
              <path d="M21 0h-1v5L3.500 21 2.500 25v66l2 2.500H21z" fill={FACE} />
              <path d="M20.500 5L4.500 22l-1 4v65" stroke="#fff" fill="none" />
              <path d="M19.500 0v5L3.500 21l-1 4v65l2 3.500H21" stroke="#000" fill="none" />
            </svg>
            <SideTabLabel $drop={22}>Bookmarks</SideTabLabel>
          </SideTab>
          <SideTab>
            <svg width="21" height="82" viewBox="0 0 21 82" shapeRendering="crispEdges">
              <path d="M10 0L3.500 9v69l2 3.500H20V0z" fill={FACE} />
              <path d="M10 0L2.500 9v69l3 3.500H20" stroke="#000" fill="none" />
              <path d="M19.500 0v82" stroke="#000" />
              <path d="M20.500 0v82" stroke="#fff" />
            </svg>
            <SideTabLabel $drop={15}>Thumbnails</SideTabLabel>
          </SideTab>
          <StripRest />
        </TabStrip>
        <SidePanel>
          <PanelHeader>
            <Ico w={10} h={11}><path d="M.5 .5h5v9h-5z" fill="#e8e8e8" stroke={SHADE} /><path d="M2 2.500h2M2 4.500h2M2 6.500h2M6 6.500h4M7.500 5v3" stroke={SHADE} /></Ico>
            <PanelMenu>Bookmark <Down w={7} /></PanelMenu>
          </PanelHeader>
          <PanelBody>
            <BlankList />
            <VTrack>
              <ScrollButton aria-label="Scroll up"><Arrow dir="up" color={SHADE} light /></ScrollButton>
              <Spacer />
              <ScrollButton aria-label="Scroll down"><Arrow dir="down" color={SHADE} light /></ScrollButton>
            </VTrack>
          </PanelBody>
          <PanelFoot>
            <HTrack>
              <ScrollButton aria-label="Scroll left"><Arrow dir="left" color={SHADE} light /></ScrollButton>
              <ScrollButton aria-label="Scroll right"><Arrow dir="right" color={SHADE} light /></ScrollButton>
            </HTrack>
          </PanelFoot>
        </SidePanel>
        <Splitter />
        <DocArea>
          <DocRow>
            <Viewport><DocumentPage /></Viewport>
            <VTrack>
              <ScrollButton aria-label="Page menu"><Arrow dir="right" /></ScrollButton>
              <ScrollButton aria-label="Scroll up"><Arrow dir="up" /></ScrollButton>
              <TrackPart $share={51} />
              <Thumb />
              <TrackPart $share={49} />
              <ScrollButton aria-label="Scroll down"><Arrow dir="down" /></ScrollButton>
            </VTrack>
          </DocRow>
          <StatusBar>
            <StatusControls>
              <StatusButton $w={20} aria-label="Toggle pane">
                <Ico w={18} h={14}><path d="M0 .5h15.500l2 2v9l-2 2H0" stroke="#000" /><path d="M8 3h1v8H8zM3 7l3-3v6zM14 7l-3-3v6z" fill="#000" /></Ico>
              </StatusButton>
              <StatusButton $w={22} aria-label="First page"><Ico w={8} h={7}><path d="M0 0h2v7H0zM7 0v7L3 4V3z" fill="#000" /></Ico></StatusButton>
              <StatusButton $w={14} aria-label="Previous page"><Ico w={5} h={7}><path d="M4 0v7L0 4V3z" fill="#000" /></Ico></StatusButton>
              <PageInput aria-label="Page" defaultValue="18 of 36" />
              <StatusButton $w={16} aria-label="Next page"><Ico w={5} h={7}><path d="M0 0v7l5-3V3z" fill="#000" /></Ico></StatusButton>
              <StatusButton $w={16} aria-label="Last page"><Ico w={8} h={7}><path d="M6 0h2v7H6zM1 0v7l4-3V3z" fill="#000" /></Ico></StatusButton>
              <PageSize>8,26 x 11,69 in</PageSize>
              <StatusButton $w={24} aria-label="Single page"><Ico w={9} h={9}><path d="M.5 .5h8v8h-8z" fill="#fff" stroke="#000" /></Ico></StatusButton>
              <StatusButton $w={24} $pressed aria-label="Continuous"><Ico w={10} h={10}><path d="M1.500 0v3.500h7V0M1.500 10V6.500h7V10M0 3.500h10M0 6.500h10" stroke="#000" /></Ico></StatusButton>
              <StatusButton $w={24} aria-label="Continuous facing"><Ico w={10} h={10}><path d="M1.500 0v3.500M3.500 0v3.500M6.500 0v3.500M8.500 0v3.500M0 3.500h4M6 3.500h4M0 6.500h4M6 6.500h4M1.500 6v4M3.500 6v4M6.500 6v4M8.500 6v4" stroke="#000" /></Ico></StatusButton>
              <StatusButton $w={29} aria-label="Security"><Ico w={16} h={10}><path d="M1.500 1.500h5l1 2h7v2h-2v1h-5l-1 2h-5l-1-2v-3z" fill="#ff0" stroke="#504000" /><path d="M2 4h2v2H2z" fill="#000" /></Ico></StatusButton>
            </StatusControls>
            <HTrack>
              <ScrollButton aria-label="Scroll left"><Arrow dir="left" color={SHADE} light /></ScrollButton>
              <ScrollButton aria-label="Scroll right"><Arrow dir="right" color={SHADE} light /></ScrollButton>
            </HTrack>
            <ScrollCorner />
          </StatusBar>
        </DocArea>
      </Workspace>
      <Taskbar>
        <StartButton><StartLogo />Пуск</StartButton>
        <BarGap />
        <BarGrip $tall />
        <QuickLaunch>
          <DesktopIcon />
          <SearchFolderIcon />
          <WordIcon />
        </QuickLaunch>
        <BarGap />
        <BarGrip $tall />
        <Tasks>
          {tasks.map(t => <Task key={t.label} $active={t.active}>{t.icon}{t.label}</Task>)}
        </Tasks>
        <BarGap />
        <Tray>
          <SchedulerIcon />
          <Lang>Ru</Lang>
          <SpeakerIcon />
          <PurpleIcon />
          <AtiIcon />
          <Clock>22:53</Clock>
        </Tray>
      </Taskbar>
    </Window>
  );
}
